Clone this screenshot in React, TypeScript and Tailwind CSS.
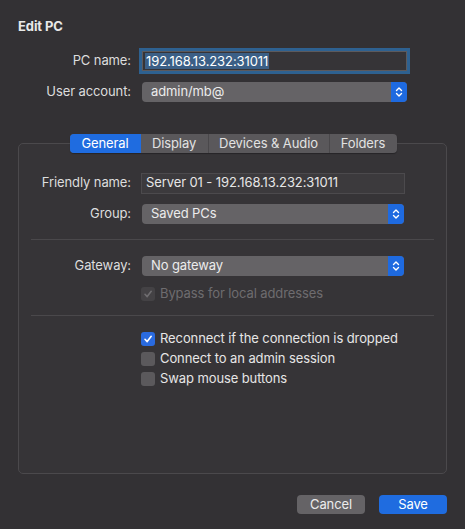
import React from "react";

const FONT = { fontFamily: "Inter, 'Liberation Sans', sans-serif" };

function Stepper() {
  return (
    <span className="flex h-full w-[16px] items-center justify-center rounded-r-[4px] bg-[#1e6ae0]">
      <svg width="8" height="12" viewBox="0 0 8 12" fill="none" stroke="#ffffff" strokeWidth="1.4" strokeLinecap="round" strokeLinejoin="round">
        <path d="M1.5 4.5 L4 2 L6.5 4.5" />
        <path d="M1.5 7.5 L4 10 L6.5 7.5" />
      </svg>
    </span>
  );
}

function Select({ value, width }: { value: string; width: string }) {
  return (
    <div className={`flex h-[20px] items-center rounded-[4px] bg-[#656366] ${width}`}>
      <span className="flex-1 pl-[9px] text-[13px] text-[#ececec]">{value}</span>
      <Stepper />
    </div>
  );
}

function Check({ checked, disabled }: { checked?: boolean; disabled?: boolean }) {
  const bg = checked && !disabled ? "bg-[#2a6be0]" : disabled ? "bg-[#444245]" : "bg-[#5b595c]";
  return (
    <span className={`flex h-[14px] w-[14px] items-center justify-center rounded-[3px] ${bg}`}>
      {checked && (
        <svg width="10" height="10" viewBox="0 0 10 10" fill="none" stroke={disabled ? "#6f6d70" : "#ffffff"} strokeWidth="1.6" strokeLinecap="round" strokeLinejoin="round">
          <path d="M2 5.3 L4.2 7.6 L8.2 2.3" />
        </svg>
      )}
    </span>
  );
}

function CheckRow({ label, checked, disabled }: { label: string; checked?: boolean; disabled?: boolean }) {
  return (
    <div className="flex h-[20px] items-center gap-[5px] pl-[122px]">
      <Check checked={checked} disabled={disabled} />
      <span className={`text-[13px] ${disabled ? "text-[#6e6c6f]" : "text-[#e6e6e6]"}`}>{label}</span>
    </div>
  );
}

const TABS = ["General", "Display", "Devices & Audio", "Folders"];
const TAB_W = ["w-[71px]", "w-[67px]", "w-[121px]", "w-[68px]"];

export default function App() {
  return (
    <div style={FONT} className="flex h-[529px] w-[465px] flex-col bg-[#333134] px-[18px] pt-[18px] tracking-[-0.1px] text-[#dddddd]">
      <h1 className="h-[16px] text-[13px] font-bold leading-[16px] text-[#e8e8e8]">Edit PC</h1>

      {/* connection */}
      <div className="mt-[17px] flex h-[20px] items-center">
        <span className="w-[113px] text-right text-[13px]">PC name:</span>
        <div className="ml-[11px] flex h-[20px] w-[265px] items-center border border-[#5c5a5d] bg-[#363437] shadow-[0_0_0_3px_#2e6190]">
          <span className="ml-[2px] bg-[#3b5f86] px-[1px] text-[13px] leading-[16px] text-white">192.168.13.232:31011</span>
        </div>
      </div>
      <div className="mt-[11px] flex h-[20px] items-center">
        <span className="w-[113px] text-right text-[13px]">User account:</span>
        <div className="ml-[11px]">
          <Select value="admin/mb@" width="w-[265px]" />
        </div>
      </div>

      {/* settings box */}
      <div className="mt-[41px] flex h-[331px] flex-col rounded-[5px] border border-[#4b494c] bg-[#363437]">
        <div className="-mt-[10px] flex justify-center pl-[1px]">
          <div className="flex h-[19px] overflow-hidden rounded-[4px] bg-[#5a585b] text-[13px] shadow-[0_1px_1px_rgba(0,0,0,0.3)]">
            {TABS.map((t, i) => (
              <span
                key={t}
                className={`flex items-center justify-center ${TAB_W[i]} ${i === 0 ? "bg-[#1f6ce0] text-white" : "text-[#e2e2e2]"} ${i > 1 ? "border-l border-[#4a484b]" : ""}`}
              >
                {t}
              </span>
            ))}
          </div>
        </div>

        <div className="mt-[20px] flex h-[20px] items-center">
          <span className="w-[112px] text-right text-[13px]">Friendly name:</span>
          <div className="ml-[10px] flex h-[21px] w-[264px] items-center border border-[#4c4a4d] bg-[#3c3a3d] pl-[4px] text-[13px] text-[#e6e6e6]">
            Server 01 - 192.168.13.232:31011
          </div>
        </div>
        <div className="mt-[11px] flex h-[20px] items-center">
          <span className="w-[112px] text-right text-[13px]">Group:</span>
          <div className="ml-[11px]">
            <Select value="Saved PCs" width="w-[262px]" />
          </div>
        </div>

        <div className="mx-[12px] mt-[15px] h-px bg-[#4a484b]" />

        <div className="mt-[16px] flex h-[20px] items-center">
          <span className="w-[112px] text-right text-[13px]">Gateway:</span>
          <div className="ml-[11px]">
            <Select value="No gateway" width="w-[262px]" />
          </div>
        </div>
        <div className="mt-[8px]">
          <CheckRow label="Bypass for local addresses" checked disabled />
        </div>

        <div className="mx-[12px] mt-[11px] h-px bg-[#4a484b]" />

        <div className="mt-[13px] flex flex-col">
          <CheckRow label="Reconnect if the connection is dropped" checked />
          <CheckRow label="Connect to an admin session" />
          <CheckRow label="Swap mouse buttons" />
        </div>
      </div>

      {/* actions */}
      <div className="mt-[21px] flex justify-end gap-[14px]">
        <button className="h-[19px] w-[68px] rounded-[4px] bg-[#656366] text-[13px] text-[#ececec]">Cancel</button>
        <button className="h-[19px] w-[68px] rounded-[4px] bg-[#1f6ce0] text-[13px] text-white">Save</button>
      </div>
    </div>
  );
}
